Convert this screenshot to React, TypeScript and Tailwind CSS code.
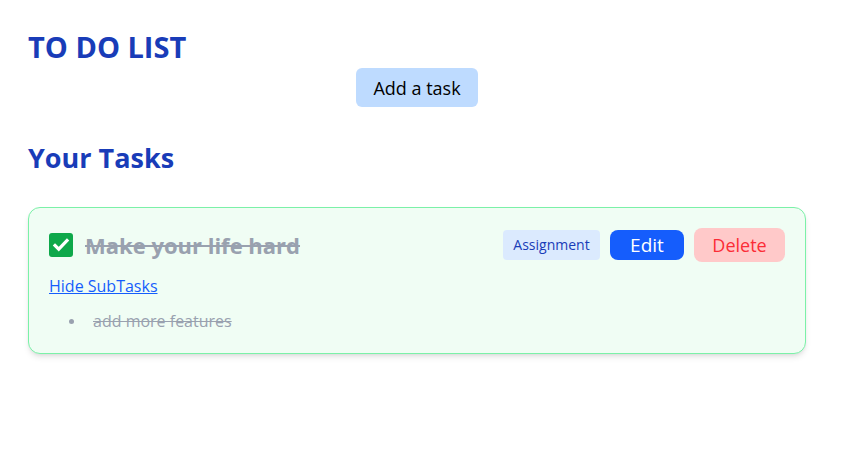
const App = () => {
  return (
    <div className="min-h-screen bg-white pt-[29px] pl-7 font-['Open_Sans',sans-serif]">
      <div className="w-[778px]">
        <h1 className="text-[29px] leading-9 font-bold text-blue-800">TO DO LIST</h1>
        <button className="mx-auto mt-[3px] block h-[39px] w-[122px] rounded-md bg-blue-200 text-lg text-black">
          Add a task
        </button>
        <h2 className="mt-[33px] text-[27px] leading-9 font-bold text-blue-800">Your Tasks</h2>

        <div className="mt-[31px] rounded-xl border border-green-300 bg-green-50 p-5 shadow-md">
          <div className="flex h-[34px] items-center justify-between">
            <div className="flex items-center gap-3">
              <div className="flex h-6 w-6 items-center justify-center rounded-[3px] bg-[#0ea84a]">
                <svg viewBox="0 0 24 24" className="h-[18px] w-[18px]">
                  <path
                    d="M4 12.5l5 5 11-11.5"
                    fill="none"
                    stroke="white"
                    strokeWidth="4.2"
                    strokeLinecap="square"
                    strokeLinejoin="miter"
                  />
                </svg>
              </div>
              <span className="text-[22px] font-bold text-gray-400 line-through">Make your life hard</span>
            </div>
            <div className="flex items-center gap-2.5">
              <span className="flex h-[30px] w-[97px] items-center justify-center rounded bg-blue-100 text-sm text-blue-800">
                Assignment
              </span>
              <button className="h-[30px] w-[74px] rounded-lg bg-blue-600 text-[19px] text-white">Edit</button>
              <button className="h-[34px] w-[91px] rounded-lg bg-red-200 text-lg text-red-500">Delete</button>
            </div>
          </div>
          <a href="#" className="mt-3 inline-block text-base text-blue-600 underline">
            Hide SubTasks
          </a>
          <ul className="mt-[11px]">
            <li className="flex items-center text-base leading-6 text-gray-400">
              <span className="ml-[20px] h-[5px] w-[5px] rounded-full bg-gray-400" />
              <span className="ml-[19px] line-through">add more features</span>
            </li>
          </ul>
        </div>
      </div>
    </div>
  );
};

export default App;
